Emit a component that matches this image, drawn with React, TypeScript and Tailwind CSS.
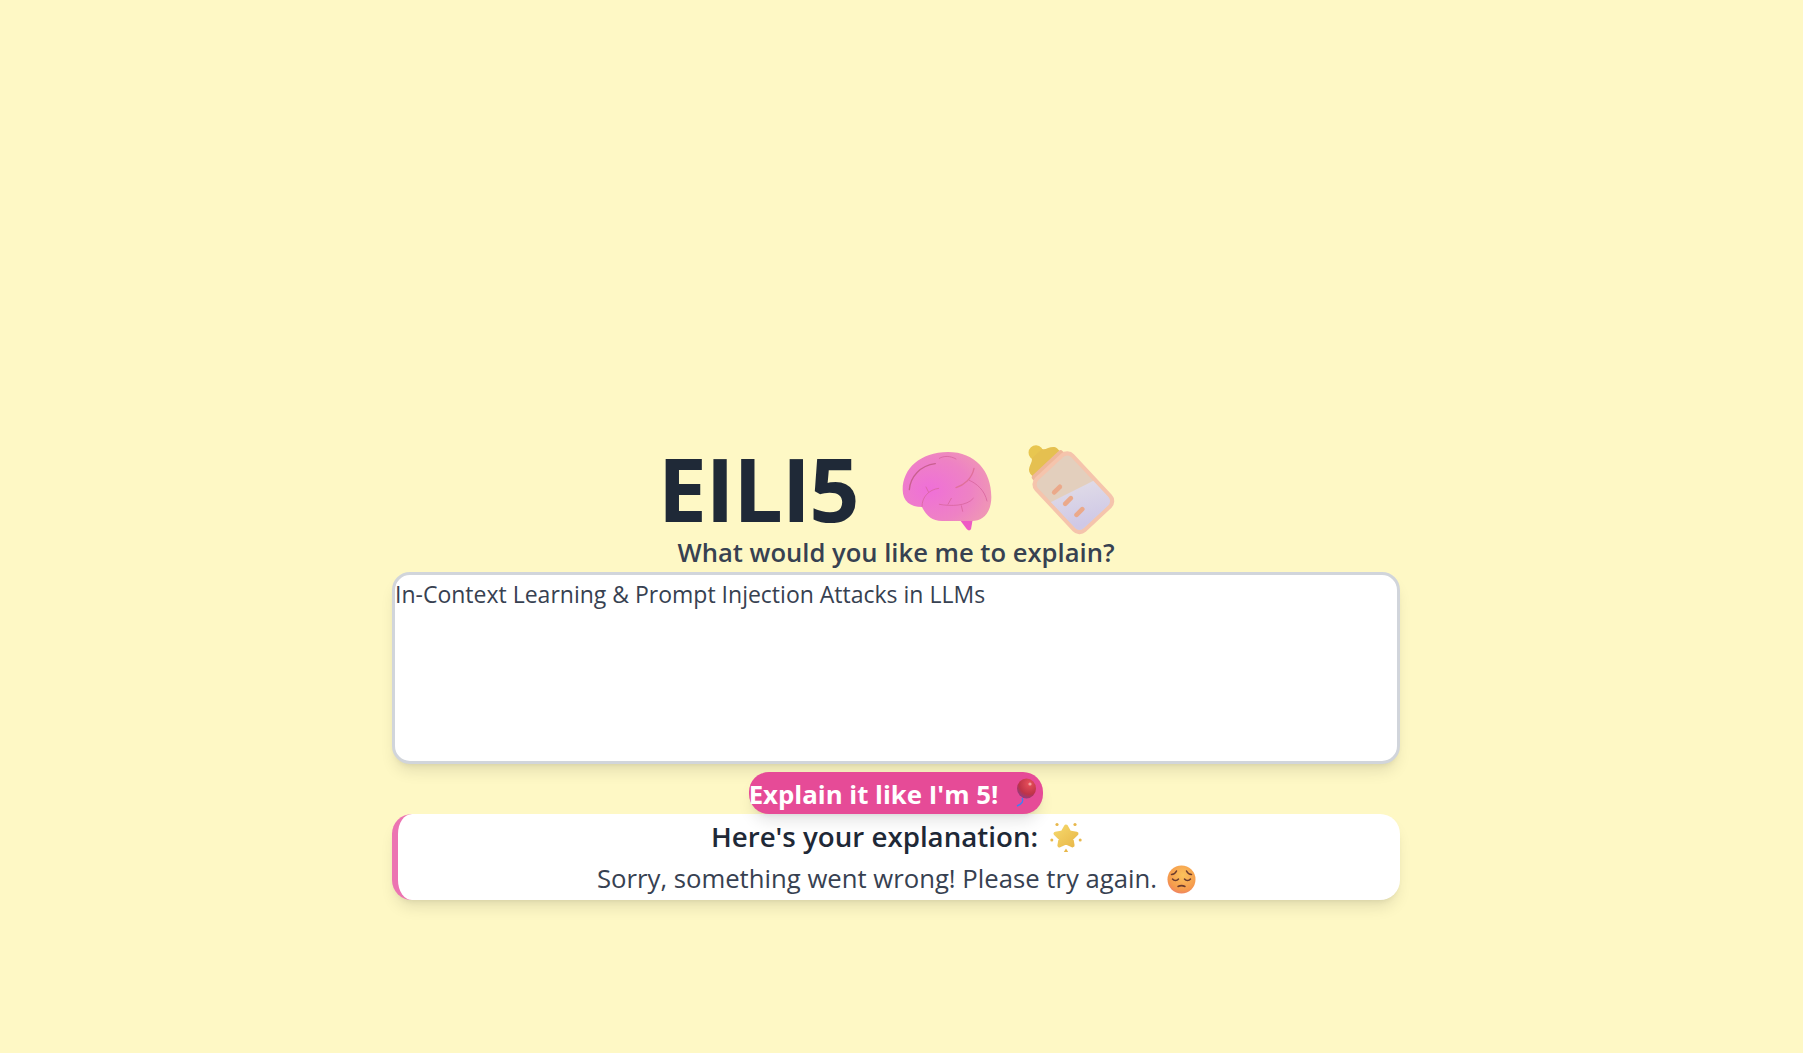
import React from 'react';

function BrainIcon() {
  return (
    <svg width="90" height="82" viewBox="70 62 270 246" className="shrink-0">
      <defs>
        <radialGradient id="brainFill" cx="0.3" cy="0.55" r="0.85">
          <stop offset="0" stopColor="#ef6fd8" />
          <stop offset="0.55" stopColor="#ee82c4" />
          <stop offset="1" stopColor="#f0a0ae" />
        </radialGradient>
      </defs>
      <path d="M246 272 L282 268 L277 297 Q271 304 264 296 Z" fill="#ee5ac4" />
      <path
        d="M72 178 C72 115 125 65 208 65 C290 65 338 122 338 200 C338 248 312 272 280 272 L190 272 C160 272 142 255 130 230 C95 230 72 212 72 178 Z"
        fill="url(#brainFill)"
      />
      <g fill="none" stroke="#d9669f" strokeWidth="2.5" strokeLinecap="round">
        <path d="M92 178 C95 140 125 105 170 100" stroke="#c9608f" strokeWidth="4" />
        <path d="M182 84 C195 76 215 76 232 86" />
        <path d="M232 172 C255 165 280 145 286 114" stroke="#e0709a" strokeWidth="4" />
        <path d="M272 150 C295 160 318 180 325 212" />
        <path d="M130 228 C130 200 150 178 180 174" />
        <path d="M142 170 L150 186" />
        <path d="M182 222 C215 228 265 228 284 204" />
        <path d="M218 204 L208 222" />
        <path d="M248 226 L252 243" />
      </g>
    </svg>
  );
}

function BottleIcon() {
  return (
    <svg width="96" height="96" viewBox="440 42 270 270" className="shrink-0">
      <defs>
        <linearGradient id="milkFill" x1="0.7" y1="0" x2="0.3" y2="1">
          <stop offset="0" stopColor="#e9e6e8" />
          <stop offset="1" stopColor="#cfc8e6" />
        </linearGradient>
        <clipPath id="milkClip">
          <polygon points="505,215 665,135 720,200 720,320 560,320" />
        </clipPath>
      </defs>
      {/* nipple + neck + body, long axis points up-left */}
      <g transform="rotate(-43 578 187)">
        <circle cx="578" cy="30" r="21" fill="#e8c650" />
        <path d="M558 34 L598 34 C602 44 628 44 630 62 L630 84 L526 84 L526 62 C528 44 554 44 558 34 Z" fill="#e5c050" />
        <rect x="520" y="70" width="116" height="24" rx="8" fill="#efb79a" />
        <rect x="503" y="80" width="150" height="208" rx="26" fill="#f5c4ac" />
        <rect x="514" y="91" width="128" height="186" rx="17" fill="#e3cfbd" />
      </g>
      <g clipPath="url(#milkClip)">
        <g transform="rotate(-43 578 187)">
          <rect x="514" y="91" width="128" height="186" rx="17" fill="url(#milkFill)" />
        </g>
      </g>
      <g stroke="#eba98a" strokeWidth="13" strokeLinecap="round">
        <path d="M522 184 L538 168" />
        <path d="M553 216 L569 200" />
        <path d="M585 247 L601 231" />
      </g>
    </svg>
  );
}

function BalloonIcon() {
  return (
    <svg width="24" height="30" viewBox="0 0 24 30" className="shrink-0">
      <defs>
        <radialGradient id="balloonFill" cx="0.65" cy="0.25" r="0.9">
          <stop offset="0" stopColor="#e8505a" />
          <stop offset="0.6" stopColor="#bf3348" />
          <stop offset="1" stopColor="#7d3f9c" />
        </radialGradient>
      </defs>
      <path d="M9 20 C11 23 9 26 4 28" fill="none" stroke="#3b82f6" strokeWidth="1.4" />
      <ellipse cx="13.5" cy="10.5" rx="9.5" ry="10" fill="url(#balloonFill)" />
      <circle cx="17" cy="6" r="1.6" fill="#f3a0a0" />
    </svg>
  );
}

function StarIcon() {
  return (
    <svg width="32" height="32" viewBox="0 0 32 32" className="shrink-0">
      <defs>
        <linearGradient id="starFill" x1="0" y1="0" x2="1" y2="1">
          <stop offset="0" stopColor="#f5d76a" />
          <stop offset="1" stopColor="#e9b94a" />
        </linearGradient>
      </defs>
      <path
        d="M16 5.5 L19.4 11.4 L26.5 12.6 L21.4 17.6 L22.6 24.4 L16 21.4 L9.4 24.4 L10.6 17.6 L5.5 12.6 L12.6 11.4 Z"
        fill="url(#starFill)"
        stroke="url(#starFill)"
        strokeWidth="4"
        strokeLinejoin="round"
      />
      <g fill="#e8b84c">
        <circle cx="7" cy="3.5" r="1.6" />
        <circle cx="25" cy="3.5" r="1.6" />
        <circle cx="1.8" cy="19" r="1.5" />
        <circle cx="30.2" cy="19" r="1.5" />
        <path d="M16 27.5 L18.2 31 L13.8 31 Z" />
      </g>
    </svg>
  );
}

function PensiveIcon() {
  return (
    <svg width="29" height="29" viewBox="0 0 29 29" className="shrink-0">
      <defs>
        <radialGradient id="faceFill" cx="0.55" cy="0.35" r="0.8">
          <stop offset="0" stopColor="#fbc35c" />
          <stop offset="0.65" stopColor="#f59a4c" />
          <stop offset="1" stopColor="#ea6f78" />
        </radialGradient>
      </defs>
      <circle cx="14.5" cy="14.5" r="14" fill="url(#faceFill)" />
      <g fill="none" stroke="#6b3b2e" strokeWidth="1.5" strokeLinecap="round">
        <path d="M4.5 9.5 C6.5 9.5 8.5 8 9.5 6" />
        <path d="M24.5 9.5 C22.5 9.5 20.5 8 19.5 6" />
        <path d="M5.5 14 C7 16 10 16 11.5 14" />
        <path d="M17.5 14 C19 16 22 16 23.5 14" />
        <path d="M11 21.5 C13 20.5 16 20.5 18 21.5" />
      </g>
    </svg>
  );
}

export default function App() {
  return (
    <div className="min-h-[1053px] bg-[#fef8c5] font-['Open_Sans',sans-serif] overflow-hidden">
      <div className="w-[1008px] ml-[392px] pt-[440px] flex flex-col items-center">
        <div className="flex items-center h-[97px] pr-[18px]">
          <h1 className="text-[88px] leading-[97px] font-bold text-[#1f2937] tracking-[-1.4px]">EILI5</h1>
          <div className="ml-[44px] mt-[6px]">
            <BrainIcon />
          </div>
          <div className="ml-[33px] -mr-[5px] mt-[3px]">
            <BottleIcon />
          </div>
        </div>
        <label className="text-[25.6px] leading-[32px] mb-[3px] font-semibold text-[#374151]">What would you like me to explain?</label>
        <textarea
          readOnly
          defaultValue="In-Context Learning & Prompt Injection Attacks in LLMs"
          className="w-full h-[192px] block bg-white border-[3px] border-[#d1d5db] rounded-[18px] text-[23px] leading-[38px] text-[#374151] shadow-lg resize-none outline-none"
        />
        <button className="relative z-10 mt-[8px] h-[42px] flex items-center bg-[#e64b97] rounded-[20px] text-white text-[25.8px] font-bold shadow-lg">
          <span className="pt-[3px]">Explain it like I'm 5!</span>
          <span className="ml-[15px] mr-[6px]">
            <BalloonIcon />
          </span>
        </button>
        <div className="w-full h-[86px] pt-[2px] pr-[5px] bg-white border-l-[6px] border-[#ec74b2] rounded-[20px] shadow-lg flex flex-col items-center">
          <h2 className="h-[42px] flex items-center text-[27.7px] font-semibold text-[#1f2937]">
            Here's your explanation:
            <span className="ml-[12px]">
              <StarIcon />
            </span>
          </h2>
          <p className="h-[42px] flex items-center text-[25.7px] text-[#374151]">
            Sorry, something went wrong! Please try again.
            <span className="ml-[10px]">
              <PensiveIcon />
            </span>
          </p>
        </div>
      </div>
    </div>
  );
}
